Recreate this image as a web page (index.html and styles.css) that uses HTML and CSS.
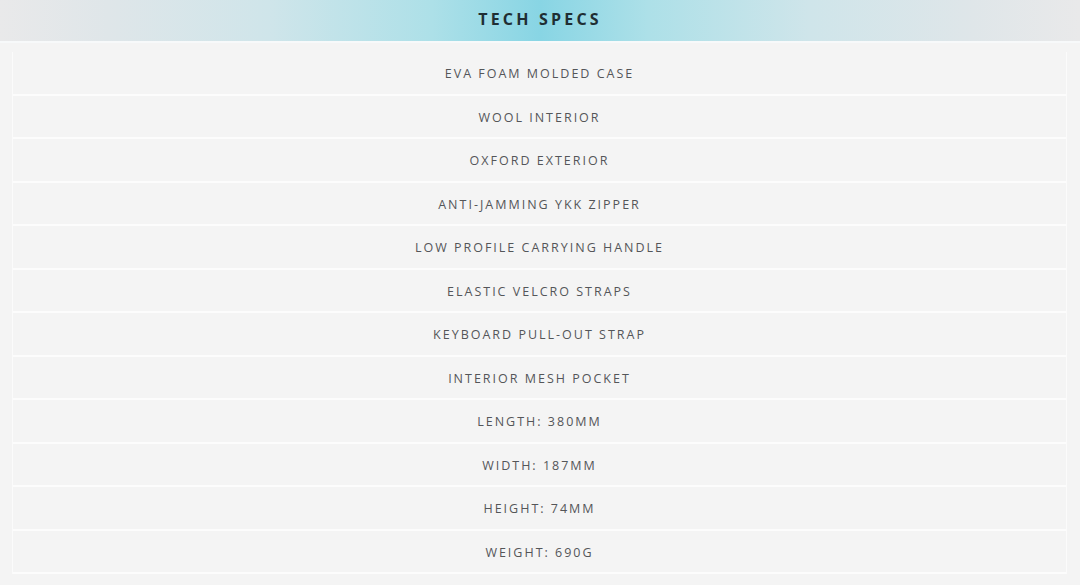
FILE: index.html
```html
<!DOCTYPE html>
<html>
<head>
<meta charset="utf-8">
<link rel="stylesheet" href="styles.css">
</head>
<body>
<header class="specs-header">
  <h2 class="specs-title">TECH SPECS</h2>
</header>
<div class="specs-wrap">
  <ul class="specs-list">
    <li class="spec-row">EVA FOAM MOLDED CASE</li>
    <li class="spec-row">WOOL INTERIOR</li>
    <li class="spec-row">OXFORD EXTERIOR</li>
    <li class="spec-row">ANTI-JAMMING YKK ZIPPER</li>
    <li class="spec-row">LOW PROFILE CARRYING HANDLE</li>
    <li class="spec-row">ELASTIC VELCRO STRAPS</li>
    <li class="spec-row">KEYBOARD PULL-OUT STRAP</li>
    <li class="spec-row">INTERIOR MESH POCKET</li>
    <li class="spec-row">LENGTH: 380MM</li>
    <li class="spec-row">WIDTH: 187MM</li>
    <li class="spec-row">HEIGHT: 74MM</li>
    <li class="spec-row">WEIGHT: 690G</li>
  </ul>
</div>
</body>
</html>
```

FILE: styles.css
```css
html, body {
  margin: 0;
  padding: 0;
  background: #f4f4f4;
  font-family: "Open Sans", "Liberation Sans", sans-serif;
}

.specs-header {
  height: 43px;
  box-sizing: border-box;
  padding-bottom: 4px;
  display: flex;
  align-items: center;
  justify-content: center;
  background: linear-gradient(90deg, #e9e9ea 0%, #dfe6e9 10%, #cfe5ea 25%, #ade0e8 40%, #88d5e4 50%, #ade0e8 60%, #cfe5ea 75%, #dfe6e9 90%, #e9e9ea 100%);
  border-bottom: 2px solid #f7f9fa;
}

.specs-title {
  margin: 0;
  font-family: "Open Sans", "Liberation Sans", sans-serif;
  font-weight: 700;
  font-size: 16px;
  letter-spacing: 3.2px;
  color: #1f2e33;
}

.specs-wrap {
  padding: 9px 13px 0 12px;
}

.specs-list {
  list-style: none;
  margin: 0;
  padding: 0;
  border-left: 1px solid #fbfbfb;
  border-right: 1px solid #fbfbfb;
}

.spec-row {
  height: 43.5px;
  box-sizing: border-box;
  display: flex;
  align-items: center;
  justify-content: center;
  border-bottom: 2px solid #fcfcfc;
  padding-top: 2px;
  font-size: 12.5px;
  letter-spacing: 2px;
  color: #545659;
}
```
